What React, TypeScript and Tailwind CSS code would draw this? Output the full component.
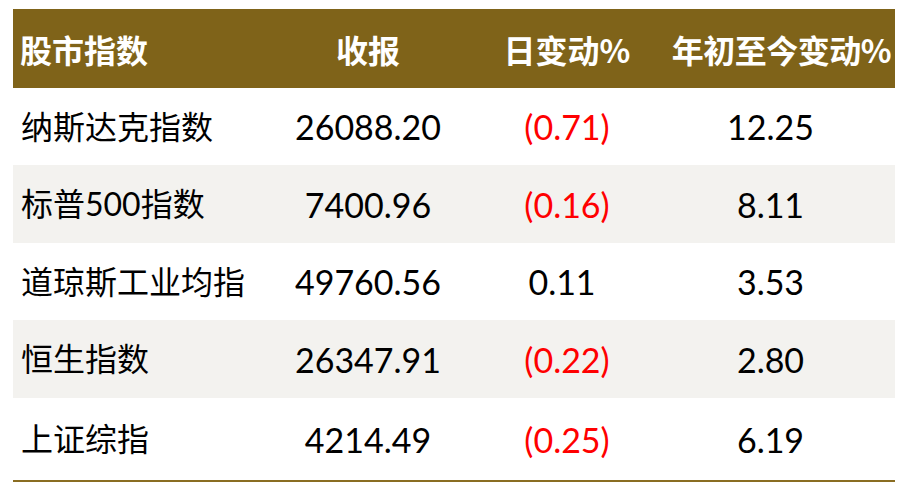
const rows = [
  { name: "纳斯达克指数", close: "26088.20", day: "(0.71)", ytd: "12.25", h: "h-[77px]", gray: false },
  { name: "标普500指数", close: "7400.96", day: "(0.16)", ytd: "8.11", h: "h-[78px]", gray: true },
  { name: "道琼斯工业均指", close: "49760.56", day: "0.11", ytd: "3.53", h: "h-[77px]", gray: false },
  { name: "恒生指数", close: "26347.91", day: "(0.22)", ytd: "2.80", h: "h-[78px]", gray: true },
  { name: "上证综指", close: "4214.49", day: "(0.25)", ytd: "6.19", h: "h-[82px]", gray: false },
];

const cjk = "font-['Noto_Sans_CJK_SC',sans-serif]";
const num = "font-['Lato','Noto_Sans_CJK_SC',sans-serif]";

export default function App() {
  return (
    <div className="w-[902px] h-[493px] bg-white pt-[9px] pl-[13px]">
      <div className="w-[882px]">
        {/* header */}
        <div className={`grid grid-cols-[257px_196px_202px_227px] h-[79px] items-center bg-[#7f6319] text-white font-bold text-[32px] ${cjk}`}>
          <div className="pl-[7px]">股市指数</div>
          <div className="text-center">收报</div>
          <div className="text-center">日变动%</div>
          <div className="text-right pr-[4px] tracking-[-0.5px]">年初至今变动%</div>
        </div>

        {rows.map((r) => (
          <div
            key={r.name}
            className={`grid grid-cols-[257px_196px_202px_227px] items-center ${r.h} ${r.gray ? "bg-[#f3f2ef]" : "bg-white"}`}
          >
            <div className={`pl-[8px] text-[32px] text-black ${num}`}>{r.name}</div>
            <div className={`text-center text-[34px] text-black ${num}`}>{r.close}</div>
            <div className={`text-center text-[34px] ${num} ${r.day.startsWith("(") ? "text-[#ff0000]" : "text-black pr-[10px]"}`}>
              {r.day}
            </div>
            <div className={`text-center pr-[22px] text-[34px] text-black ${num}`}>{r.ytd}</div>
          </div>
        ))}
        <div className="h-[2px] bg-[#8a6d22]" />
      </div>
    </div>
  );
}
